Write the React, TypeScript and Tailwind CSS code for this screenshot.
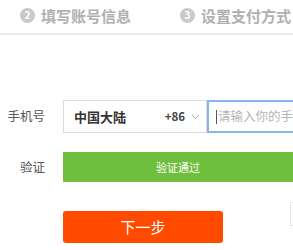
import React from 'react';

const Step: React.FC<{ n: number; label: string }> = ({ n, label }) => (
  <div className="flex items-center gap-[6px]">
    <span className="flex h-[15px] w-[15px] items-center justify-center rounded-full bg-[#c9c9c9] text-[10px] font-bold leading-none text-white">
      {n}
    </span>
    <span className="whitespace-nowrap text-[15px] font-bold leading-none text-[#b0b0b0]">{label}</span>
  </div>
);

const App: React.FC = () => {
  return (
    <div
      className="relative h-[250px] w-[293px] overflow-hidden bg-white"
      style={{ fontFamily: '"Noto Sans CJK SC", "Noto Sans", sans-serif' }}
    >
      <div className="flex h-[33px] items-center gap-[49px] pl-[20px] pb-[3px]">
        <Step n={2} label="填写账号信息" />
        <Step n={3} label="设置支付方式" />
      </div>
      <div className="h-[2px] w-full bg-[#ececec]" />

      <div className="mt-[65px] flex items-center">
        <span className="w-[45px] shrink-0 whitespace-nowrap text-right text-[12.5px] text-[#555]">手机号</span>
        <div className="ml-[18px] flex h-[33px] w-[144px] shrink-0 items-center border border-[#dcdcdc] pl-[10px] pr-[6px]">
          <span className="whitespace-nowrap text-[13px] font-bold text-[#333]">中国大陆</span>
          <span className="ml-auto text-[11.5px] font-bold text-[#444]">+86</span>
          <svg className="ml-[6px]" width="9" height="6" viewBox="0 0 9 6" fill="none">
            <path d="M1 1l3.5 3.5L8 1" stroke="#aaa" strokeWidth="1" />
          </svg>
        </div>
        <div className="flex h-[33px] w-[140px] shrink-0 items-center border-2 border-[#86b4f0] pl-[7px]">
          <span className="h-[14px] w-px bg-[#555]" />
          <span className="ml-[1px] whitespace-nowrap text-[12.5px] text-[#b5b5b5]">请输入你的手机号</span>
        </div>
      </div>

      <div className="mt-[19px] flex items-center">
        <span className="w-[45px] shrink-0 whitespace-nowrap text-right text-[12.5px] text-[#555]">验证</span>
        <div className="ml-[18px] flex h-[30px] w-[230px] shrink-0 items-center justify-center bg-[#6fbe3e] text-[11px] text-white">
          验证通过
        </div>
      </div>

      <div className="mt-[29px] flex">
        <button className="ml-[63px] flex h-[32px] w-[160px] items-center justify-center rounded-[3px] bg-[#ff4a00] text-[15px] text-white">
          下一步
        </button>
      </div>

      <div className="absolute left-[290px] top-[202px] h-[24px] w-[10px] border border-[#e6e6e6]" />
    </div>
  );
};

export default App;
